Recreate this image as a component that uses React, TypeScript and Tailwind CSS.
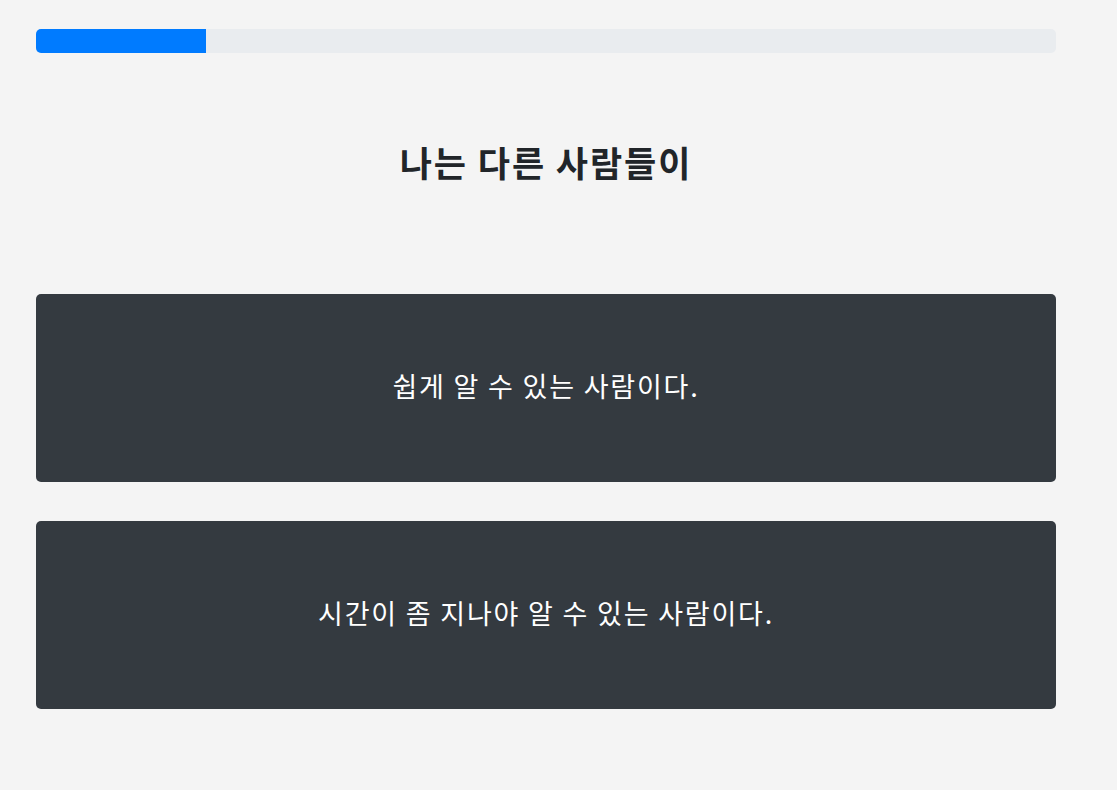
export default function App() {
  return (
    <div
      className="min-h-[790px] w-full bg-[#f4f4f4]"
      style={{ fontFamily: '"Noto Sans CJK KR", "Noto Sans", sans-serif' }}
    >
      <div className="ml-[36px] flex w-[1020px] flex-col pt-[29px]">
        <div className="h-6 w-full overflow-hidden rounded-[5px] bg-[#e9ecef]">
          <div className="h-full w-[170px] bg-[#007bff]" />
        </div>
        <h1 className="mt-[85px] text-center text-[35px] font-bold leading-[48px] tracking-[1.9px] text-[#212529]">
          나는 다른 사람들이
        </h1>
        <div className="mt-[108px] flex flex-col gap-[39px]">
          <button className="flex h-[188px] w-full items-center justify-center rounded-[5px] bg-[#343a40] pb-[3px] text-[27px] tracking-[1.8px] text-white">
            쉽게 알 수 있는 사람이다.
          </button>
          <button className="flex h-[188px] w-full items-center justify-center rounded-[5px] bg-[#343a40] pb-[3px] text-[27px] tracking-[1.8px] text-white">
            시간이 좀 지나야 알 수 있는 사람이다.
          </button>
        </div>
      </div>
    </div>
  );
}
